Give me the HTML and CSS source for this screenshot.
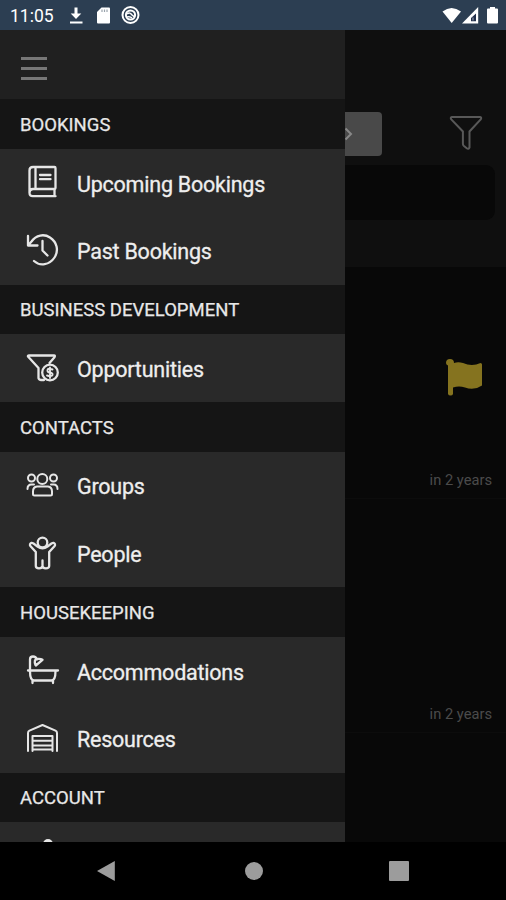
FILE: index.html
```html
<!DOCTYPE html>
<html lang="en">
<head>
<meta charset="utf-8">
<title>Bookings</title>
<link rel="stylesheet" href="styles.css">
</head>
<body>
<div class="phone">
  <header class="status">
    <span class="time">11:05</span>
    <svg class="status-left" width="72" height="20" viewBox="0 0 72 20">
      <path d="M6.500 2.500h3v6h3.800l-5.300 5.500-5.300-5.500h3.800zM2 16.500h12.500v2H2z" fill="#fff"/>
      <path d="M33.500 2.500h7.500q1 0 1 1v14q0 1-1 1H30q-1 0-1-1V7z" fill="#fff"/><path d="M34 4.500v2.500M36.500 4.500v2.500M39 4.500v2.500" stroke="#9aa4ad" stroke-width="1.200"/>
      <g fill="none" stroke="#fff"><circle cx="62.500" cy="10" r="8" stroke-width="2"/><circle cx="62.500" cy="10" r="4.600" stroke-width="2"/><path d="M59 9q3-2 4.500.5l3 2.500M59 12q3-1 5 1" stroke-width="1.500"/></g>
    </svg>
    <svg class="status-right" width="58" height="20" viewBox="0 0 58 20">
      <path d="M1.500 6.500Q10.500-.5 20 6.500L10.700 18z" fill="#fff"/>
      <path d="M37.200 2v16.500H21z" fill="#fff"/><path d="M35 8.500v7.700h-5V13z" fill="#22304c"/><path d="M32 12.500v3" stroke="#fff" stroke-width=".6"/>
      <path d="M49 2h5v1.500h2q1 0 1 1v13q0 1-1 1h-9q-1 0-1-1v-13q0-1 1-1h2z" fill="#fff"/>
    </svg>
  </header>

  <div class="screen">
    <main class="page">
      <div class="toolbar">
        <div class="controls">
          <div class="next"><svg width="9" height="14" viewBox="0 0 9 14"><path d="M1.500 1.500L7 7l-5.500 5.500"/></svg></div>
          <svg class="filter" width="34" height="36" viewBox="0 0 34 36"><path d="M3 2h28q2 .5.700 2.400L20.500 16.500v16q-1 2-2.800.7l-3-2.500q-.8-.7-.8-2V16.500L2.300 4.400Q1 2.500 3 2z"/></svg>
        </div>
        <div class="search"></div>
      </div>
      <div class="card first">
        <svg class="flag" width="38" height="40" viewBox="0 0 38 40"><path d="M5 2a4 4 0 0 1 4 4q4-1.500 9 0 9 4 17.500 0 1.500 0 1.500 1.500v21Q29 34 20 30.500q-6-2-12 0V37q-.5 1.500-2.500 1.500T3 37V8.500Q1 7.500 1 6a4 4 0 0 1 4-4z"/></svg>
        <span>in 2 years</span>
      </div>
      <div class="card"><span>in 2 years</span></div>
    </main>

    <nav class="drawer">
      <div class="drawer-top"><div class="burger"><i></i><i></i><i></i></div></div>
      <h2>BOOKINGS</h2>
      <a class="item"><svg viewBox="0 0 36 36"><path d="M9 4h21.500q1 0 1 1v20q0 1-1 1H9q-3.500 0-3.500 3.700T9 33.200h22.500M30.500 26v7M5.500 30V7.500Q5.500 4 9 4M11.500 4v22M16 12h10.500M16 16.200h10.500"/></svg><span>Upcoming Bookings</span></a>
      <a class="item"><svg viewBox="0 0 36 36"><path d="M4 5v9.500h9.500M4.500 14l3-3.500C12 4 20 2.500 26 6.500c7 4.500 9 13 4.500 20-5 7.500-14.500 9-20.500 3.500M18.500 10v9.500l5 5"/></svg><span>Past Bookings</span></a>
      <h2>BUSINESS DEVELOPMENT</h2>
      <a class="item"><svg viewBox="0 0 36 36"><path d="M20 31h-3q-2.500-.5-2.500-2V19L4 7.500Q3.500 6.500 5 6.500h25q1.500 0 .5 1.700L25.500 14"/><circle cx="26" cy="23.500" r="7.800"/><path class="dollar" d="M28.500 20.500q-4.500-1.700-5 .5t2.500 2.500q3 .8 2.500 2.500t-5.500.5M26 18.500v10.500"/></svg><span>Opportunities</span></a>
      <h2>CONTACTS</h2>
      <a class="item"><svg viewBox="0 0 36 36"><g class="fine"><circle cx="18.300" cy="13" r="5"/><circle cx="7.500" cy="12" r="3.500"/><circle cx="29.500" cy="12" r="3.500"/><path d="M13 20.500h11q4 .5 4 5v2.500q0 1.500-1.500 1.500h-16Q9 29.500 9 28v-2.500q0-4.500 4-5zM3.500 23q0-4.500 4-4.500h2.500M33.500 23q0-4.500-4-4.500H27"/></g></svg><span>Groups</span></a>
      <a class="item"><svg viewBox="0 0 36 36"><circle cx="18.500" cy="8.500" r="4.800"/><path d="M13.500 12.500L9.500 9.500Q7 8 6 10.300q-.4 1.200.8 2.200l5 5.500V32q0 2.300 3.200 2.300T18.500 32v-5.500V32q0 2.300 3.300 2.300T25.200 32V18l5-5.500q1.200-1 .8-2.200-1-2.300-3.500-.8l-4 3q-5 3.500-10 0"/></svg><span>People</span></a>
      <h2>HOUSEKEEPING</h2>
      <a class="item"><svg viewBox="0 0 36 36"><path d="M4 19.500h30M6 19V8.500Q6 5.500 9 5.500t4 3M11.500 14Q9.500 8.500 13 8t5.500.8L11.800 14.500M6 20q0 9.500 4 9.500h17.500q4 0 4-9.500M8.500 29.500V32M29 29.500V32"/></svg><span>Accommodations</span></a>
      <a class="item"><svg viewBox="0 0 36 36"><g class="fine"><path d="M4 32V14q0-1.500 1.500-2.300L18.500 6l13 5.700q1.500.8 1.500 2.300v18M8.500 32V17h20v15M9 21.700h19M9 26.400h19M9 30.500h19"/></g></svg><span>Resources</span></a>
      <h2>ACCOUNT</h2>
      <a class="item"><svg viewBox="0 0 36 36"><circle class="solid" cx="24" cy="7" r="5"/></svg></a>
    </nav>
  </div>

  <footer class="navbar">
    <svg width="18" height="22" viewBox="0 0 18 22"><path d="M17.800 1v20L0 11z"/></svg>
    <svg class="home" width="18" height="18" viewBox="0 0 18 18"><circle cx="9" cy="9" r="9"/></svg>
    <svg width="20" height="20" viewBox="0 0 20 20"><rect width="20" height="20" rx="1"/></svg>
  </footer>
</div>
</body>
</html>
```
FILE: styles.css
```css
* { box-sizing: border-box; }
body { margin: 0; background: #000; font-family: Roboto, "Liberation Sans", sans-serif; }
.phone { width: 506px; height: 900px; display: flex; flex-direction: column; overflow: hidden; }

.status { height: 30px; flex: none; display: flex; align-items: center; padding: 0 7px 0 10px; background: #2c3e52; color: #fff; }
.time { width: 58px; font-size: 17.500px; line-height: 30px; padding-top: 2px; }
.status-right { margin-left: auto; }

.screen { height: 812px; flex: none; position: relative; overflow: hidden; background: #080808; }
.toolbar { height: 237px; background: #0f0f0f; padding: 82px 11px 0; }
.controls { height: 44px; display: flex; justify-content: space-between; }
.next { width: 371px; height: 44px; border-radius: 4px; background: #494949; display: flex; align-items: center; justify-content: flex-end; padding-right: 29px; }
.next svg { fill: none; stroke: #888; stroke-width: 2; }
.filter { margin: 3px 12px 0 0; fill: none; stroke: #585858; stroke-width: 2; }
.search { height: 55px; margin-top: 9px; border-radius: 9px; background: #080808; }
.card { height: 234px; padding: 0 14px 9px; display: flex; flex-direction: column; align-items: flex-end; justify-content: flex-end; border-bottom: 1px solid #0c0c0c; color: #4b4b4b; font-size: 14.700px; line-height: 18px; }
.card.first { height: 232px; padding-top: 90px; justify-content: space-between; }
.flag { margin-right: 9px; fill: #85731f; }

.drawer { position: absolute; left: 0; top: 0; width: 345px; height: 812px; overflow: hidden; background: #292929; }
.drawer-top { height: 69.300px; padding: 27px 21px; background: #202020; }
.burger { width: 26px; height: 23px; display: flex; flex-direction: column; justify-content: space-between; }
.burger i { height: 3px; background: #777; }
h2 { height: 49.700px; margin: 0; padding: 1.600px 20px 0; background: #151515; color: #e8e8e8; font-size: 18.500px; line-height: 49px; font-weight: 400; white-space: nowrap; -webkit-text-stroke: .25px #e8e8e8; }
.item { height: 67.800px; display: flex; align-items: center; gap: 17px; padding-left: 24px; color: #eee; font-size: 21.500px; letter-spacing: -.23px; -webkit-text-stroke: .3px #eee; }
.item svg { width: 36px; height: 36px; margin-bottom: 3px; fill: none; stroke: #e6e6e6; stroke-width: 2.300; stroke-linecap: round; stroke-linejoin: round; }
.item span { padding-top: 3.500px; line-height: 28px; }
.item .fine { stroke-width: 2; }
.item .dollar { stroke-width: 1.900; }
.item .solid { fill: #e6e6e6; stroke: none; }

.navbar { height: 58px; flex: none; display: flex; align-items: center; justify-content: space-between; padding: 0 97px; background: #000; }
.navbar svg { fill: #9c9c9c; }
.navbar .home { margin-left: 3px; }
```
